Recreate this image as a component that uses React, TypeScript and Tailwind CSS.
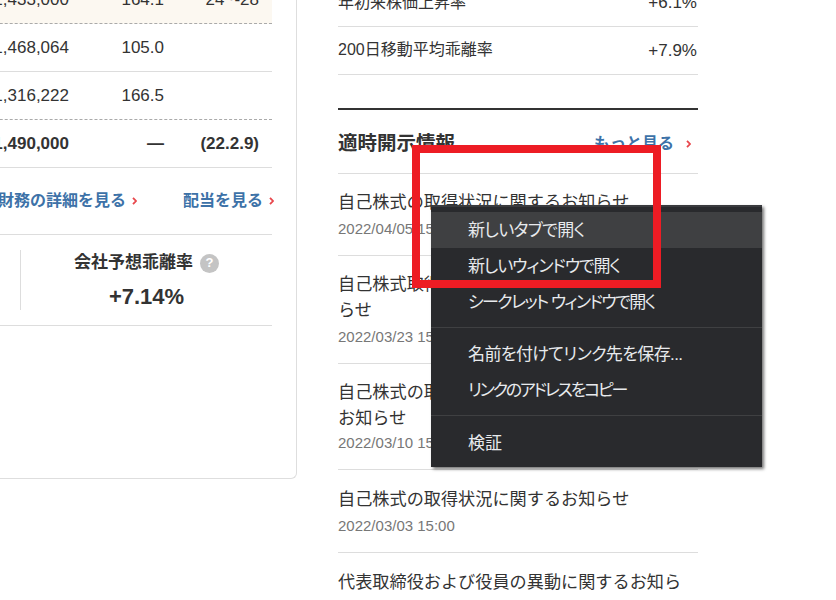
const items = [
  { title: "自己株式の取得状況に関するお知らせ", date: "2022/04/05 15:00", h: "h-[82px]", pt: "pt-[15px]", gap: "mt-[4px]" },
  { title: "自己株式取得に係る事項の決定に関するお知らせ", date: "2022/03/23 15:00", h: "h-[108px]", pt: "pt-[15px]", gap: "mt-[4px]" },
  { title: "自己株式の取得状況および取得終了に関するお知らせ", date: "2022/03/10 15:00", h: "h-[106px]", pt: "pt-[15px]", gap: "mt-[2px]" },
  { title: "自己株式の取得状況に関するお知らせ", date: "2022/03/03 15:00", h: "h-[83px]", pt: "pt-[16px]", gap: "mt-[4px]" },
  { title: "代表取締役および役員の異動に関するお知らせ", date: "2022/02/24 15:00", h: "h-[108px]", pt: "pt-[16px]", gap: "mt-[4px]" },
];

function Chevron() {
  return (
    <svg width="5" height="8" viewBox="0 0 5 8" className="shrink-0">
      <path d="M1 .8L4 4 1 7.2" fill="none" stroke="#e8474c" strokeWidth="1.8" />
    </svg>
  );
}

function TableRow({ a, b, c, className = "" }: { a: string; b?: string; c?: string; className?: string }) {
  return (
    <div className={`grid grid-cols-[169px_95px_95px] pr-[13px] items-center h-[48px] text-[17px] ${className}`}>
      <div className="text-right">{a}</div>
      <div className="text-right">{b}</div>
      <div className="text-right">{c}</div>
    </div>
  );
}

function MenuItem({ label, active, track = "" }: { label: string; active?: boolean; track?: string }) {
  return (
    <div className={`h-[36px] pl-[37px] pt-[2px] flex items-center text-[17px] [font-feature-settings:'palt'] text-[#e8eaed] ${track} ${active ? "bg-[#3f4042]" : ""}`}>
      {label}
    </div>
  );
}

export default function App() {
  return (
    <div className="relative h-[600px] w-[836px] overflow-hidden bg-white text-[#333] font-['Liberation_Sans','Noto_Sans_CJK_JP',sans-serif]">
      <div className="flex items-start mt-[-24px]">
        {/* left card, cut off by the window */}
        <div className="w-[397px] ml-[-100px] h-[503px] shrink-0 pr-[24px] border-r-[1.5px] border-b-[1.5px] border-[#dedede] rounded-br-[6px]">
          <TableRow a="1,433,000" b="164.1" c="24~-28" className="bg-[#fcf8f1] border-b border-dashed border-[#aaa]" />
          <TableRow a="1,468,064" b="105.0" className="border-b border-[#ddd]" />
          <TableRow a="1,316,222" b="166.5" className="border-b border-dashed border-[#aaa]" />
          <TableRow a="1,490,000" b="—" c="(22.2.9)" className="font-bold border-b border-[#ddd]" />
          <div className="h-[67px] flex items-center justify-end gap-[46px] border-b border-[#ddd] text-[16px] font-bold text-[#3d72a8]">
            <a className="flex items-center gap-[6px]">財務の詳細を見る<Chevron /></a>
            <a className="flex items-center gap-[6px] mr-[-2px]">配当を見る<Chevron /></a>
          </div>
          <div className="h-[91px] flex items-center border-b border-[#ddd]">
            <div className="ml-[120px] w-[252px] h-[60px] pt-[1px] border-l border-[#ddd] flex flex-col items-center">
              <div className="flex items-center gap-[7px] text-[17px] font-bold leading-[24px]">
                会社予想乖離率
                <span className="w-[19px] h-[19px] rounded-full bg-[#c4c4c4] text-white text-[13px] font-bold flex items-center justify-center">?</span>
              </div>
              <div className="mt-[8px] text-[22px] font-bold leading-[28px]">+7.14%</div>
            </div>
          </div>
        </div>

        {/* right column */}
        <div className="ml-[41px] w-[360px] shrink-0">
          <div className="flex justify-between items-center h-[48px] mt-[3px] border-b border-[#ddd]">
            <span className="text-[16px]">年初来株価上昇率</span>
            <span className="text-[17px] mr-px">+6.1%</span>
          </div>
          <div className="flex justify-between items-center h-[48px] border-b border-[#ddd]">
            <span className="text-[16px] mb-[2px]">200日移動平均乖離率</span>
            <span className="text-[17px] mr-px">+7.9%</span>
          </div>
          <div className="mt-[33px] h-[66px] pt-[4px] border-t-2 border-[#333] border-b border-b-[#ddd] flex items-center justify-between">
            <span className="text-[19.5px] font-bold">適時開示情報</span>
            <a className="flex items-center gap-[12px] mr-[7px] text-[16px] font-bold text-[#3d72a8]">もっと見る<Chevron /></a>
          </div>
          {items.map((item) => (
            <div key={item.date} className={`${item.h} ${item.pt} border-b border-[#ddd]`}>
              <div className="text-[17.16px] leading-[26px] max-w-[354px]">{item.title}</div>
              <div className={`text-[15px] leading-[20px] text-[#777] ${item.gap}`}>{item.date}</div>
            </div>
          ))}
        </div>
      </div>

      {/* context menu from the browser */}
      <div className="absolute left-[431px] top-[205px] w-[331px] h-[262px] bg-[#292a2d] border-t-[2px] border-[#3a3b3e] pt-[5px] shadow-[2px_2px_3px_rgba(0,0,0,0.55)]">
        <MenuItem label="新しいタブで開く" active track="tracking-[-0.6px]" />
        <MenuItem label="新しいウィンドウで開く" track="tracking-[-1.1px]" />
        <MenuItem label="シークレット ウィンドウで開く" track="tracking-[-1.6px]" />
        <div className="mt-[7px] mb-[8px] h-px bg-[#3f4042]" />
        <MenuItem label="名前を付けてリンク先を保存..." track="tracking-[-0.6px]" />
        <MenuItem label="リンクのアドレスをコピー" track="tracking-[-2.2px]" />
        <div className="mt-[7px] mb-[9px] h-px bg-[#3f4042]" />
        <MenuItem label="検証" />
      </div>

      {/* red annotation frame */}
      <div className="absolute left-[412px] top-[145px] w-[249px] h-[143px] border-[8px] border-[#ed1c24]" />
    </div>
  );
}
